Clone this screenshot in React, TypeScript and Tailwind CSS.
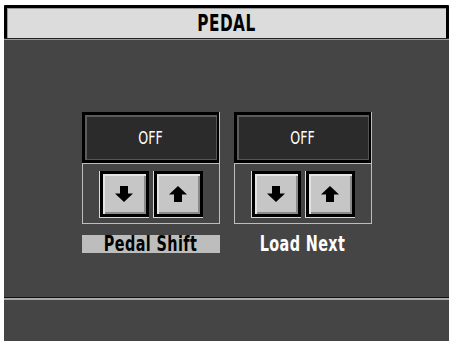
// PEDAL screen
const font = { fontFamily: '"DejaVu Sans Condensed", "DejaVu Sans", sans-serif' }

function Arrow({ dir }: { dir: 'up' | 'down' }) {
  return (
    <svg width="20" height="18" viewBox="0 0 20 18" className={dir === 'down' ? 'rotate-180' : ''}>
      <path d="M10 1 L19 9.5 L14 9.5 L14 17 L6 17 L6 9.5 L1 9.5 Z" fill="#000" />
    </svg>
  )
}

function ArrowButton({ dir }: { dir: 'up' | 'down' }) {
  return (
    <div className="w-[50px] h-[47px] border-l border-b border-[#d8d8d8]">
      <div className="w-[49px] h-[46px] border-[3px] border-black bg-[#c6c6c6] flex items-center justify-center shadow-[inset_2px_2px_0_#e4e4e4,inset_-2px_-2px_0_#8a8a8a]">
        <Arrow dir={dir} />
      </div>
    </div>
  )
}

function PedalBox({ label, selected }: { label: string; selected?: boolean }) {
  return (
    <div className="flex flex-col w-[138px]">
      <div className="h-[112px] flex flex-col border-r border-[#bdbdbd]">
        <div className="h-[51px] border-[3px] border-r-[2px] border-black bg-[#2b2b2b] flex items-center justify-center shadow-[inset_2px_2px_0_#5c5c5c,inset_-1px_-1px_0_#555]">
          <span className="text-white text-[14px] leading-none scale-y-[1.3] inline-block" style={font}>OFF</span>
        </div>
        <div className="flex-1 border-l border-t border-b border-[#bdbdbd] flex items-start justify-center gap-[4px] pt-[7px]">
          <ArrowButton dir="down" />
          <ArrowButton dir="up" />
        </div>
      </div>
      <div
        className={`mt-[11px] h-[18px] flex items-center justify-center ${
          selected ? 'bg-[#bdbdbd] text-black' : 'text-white'
        }`}
      >
        <span className="text-[16px] font-bold leading-none scale-y-[1.3] inline-block tracking-[0.4px]" style={font}>{label}</span>
      </div>
    </div>
  )
}

export default function App() {
  return (
    <div className="w-[450px] h-[346px] bg-white pt-[5px] pl-[4px]">
      <div className="w-[445px] h-[336px] bg-[#454545] flex flex-col">
        {/* title bar */}
        <div className="h-[33px] bg-[#dcdcdc] border-t-[3px] border-x-[3px] border-black rounded-t-[3px] flex items-center justify-center shadow-[inset_1px_1px_0_#9a9a9a]">
          <span className="text-black text-[17px] font-bold leading-none scale-y-[1.4] inline-block tracking-[0.5px]" style={font}>PEDAL</span>
        </div>
        <div className="h-[1px] bg-[#222]" />
        <div className="h-[1px] bg-[#9a9a9a]" />

        {/* content */}
        <div className="h-[257px] flex justify-center gap-[14px] pt-[72px]">
          <PedalBox label="Pedal Shift" selected />
          <PedalBox label="Load Next" />
        </div>

        {/* bottom strip */}
        <div className="h-[1px] bg-[#111]" />
        <div className="h-[2px] bg-[#a8a8a8]" />
        <div className="flex-1" />
      </div>
    </div>
  )
}
